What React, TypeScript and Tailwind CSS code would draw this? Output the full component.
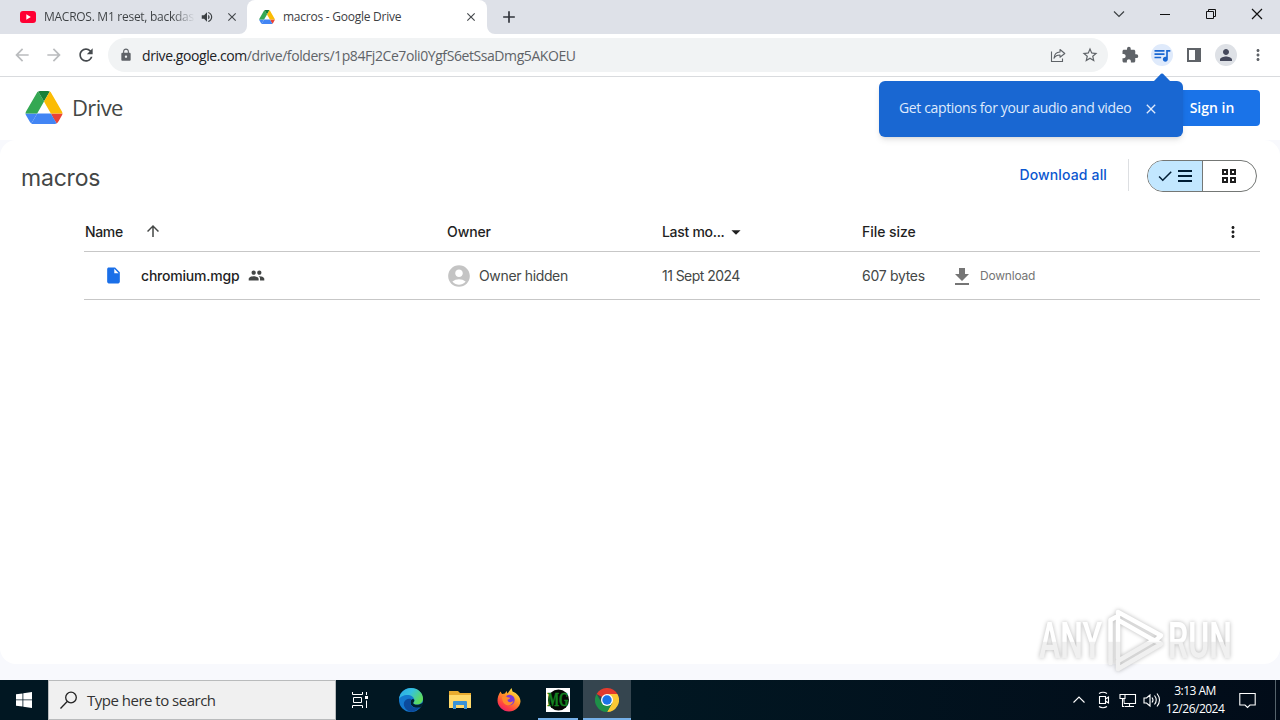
import React from 'react';
import {
  MdArrowBack,
  MdArrowForward,
  MdRefresh,
  MdLock,
  MdVolumeUp,
  MdClose,
  MdAdd,
  MdStarBorder,
  MdExtension,
  MdQueueMusic,
  MdPerson,
  MdMoreVert,
  MdArrowUpward,
  MdArrowDropDown,
  MdInsertDriveFile,
  MdPeople,
  MdAccountCircle,
  MdCheck,
  MdFileDownload,
} from 'react-icons/md';

const DriveLogo = ({ className }: { className: string }) => (
  <svg viewBox="0 0 87.3 78" className={className}>
    <path d="m6.6 66.85 3.85 6.65c.8 1.4 1.95 2.5 3.3 3.3l13.75-23.8h-27.5c0 1.55.4 3.1 1.2 4.5z" fill="#4285f4" />
    <path d="m43.65 25-13.75-23.8c-1.35.8-2.5 1.9-3.3 3.3l-25.4 44a9.06 9.06 0 0 0 -1.2 4.5h27.5z" fill="#34a853" />
    <path d="m73.55 76.8c1.35-.8 2.5-1.9 3.3-3.3l1.6-2.75 7.65-13.25c.8-1.4 1.2-2.95 1.2-4.5h-27.5l5.85 11.5z" fill="#ea4335" />
    <path d="m43.65 25 13.75-23.8c-1.35-.8-2.9-1.2-4.5-1.2h-18.5c-1.6 0-3.15.45-4.5 1.2z" fill="#188038" />
    <path d="m59.8 53h-32.3l-13.75 23.8c1.35.8 2.9 1.2 4.5 1.2h50.8c1.6 0 3.15-.45 4.5-1.2z" fill="#4285f4" />
    <path d="m73.4 26.5-12.7-22c-.8-1.4-1.95-2.5-3.3-3.3l-13.75 23.8 16.15 28h27.45c0-1.55-.4-3.1-1.2-4.5z" fill="#fbbc04" />
  </svg>
);

const TabStrip = () => (
  <div className="flex h-[34px] shrink-0 bg-[#dee1e8] font-['Open_Sans',sans-serif] text-[12px]">
    <div className="flex w-[247px] items-center pl-5">
      <svg viewBox="0 0 16 12" className="h-3 w-4 shrink-0">
        <rect width="16" height="12" rx="3" fill="#ff0033" />
        <path d="M6.3 3.3 10.8 6 6.3 8.7z" fill="#fff" />
      </svg>
      <div className="ml-2 w-[151px] bg-linear-to-r from-[#3c4043] from-85% to-transparent bg-clip-text tracking-[-0.27px] whitespace-nowrap text-transparent">
        MACROS. M1 reset, backdas
      </div>
      <MdVolumeUp className="ml-[5px] h-3.5 w-3.5 shrink-0 text-[#3c4043]" />
      <MdClose className="ml-[11px] h-3.5 w-3.5 shrink-0 text-[#45494d]" />
    </div>
    <div className="relative flex w-60 items-center rounded-t-lg bg-white pr-[9px] pl-3">
      <svg viewBox="0 0 8 8" className="absolute bottom-0 -left-2 h-2 w-2">
        <path d="M8 0v8H0a8 8 0 0 0 8-8z" fill="#fff" />
      </svg>
      <svg viewBox="0 0 8 8" className="absolute -right-2 bottom-0 h-2 w-2">
        <path d="M0 0v8h8a8 8 0 0 1-8-8z" fill="#fff" />
      </svg>
      <DriveLogo className="h-[14px] w-4" />
      <span className="ml-2 grow tracking-[-0.25px] text-[#3c4043]">macros - Google Drive</span>
      <MdClose className="h-3.5 w-3.5 text-[#45494d]" />
    </div>
    <div className="flex items-center pl-3">
      <MdAdd className="h-5 w-5 text-[#30343b]" />
    </div>
    <svg viewBox="0 0 180 34" className="ml-auto h-[34px] w-[180px]" fill="none" stroke="#111">
      <path d="m14 11.5 5 5 5-5" stroke="#3c4043" strokeWidth="1.2" />
      <path d="M60 14.5h10" />
      <path d="M106.500 11.500h7v7h-7zM108.500 11.500v-2h7v7h-2" />
      <path d="m152 9 10 10m0-10-10 10" strokeWidth="1.2" />
    </svg>
  </div>
);

const Toolbar = () => (
  <div className="flex h-[43px] shrink-0 items-center border-b border-[#d9dbde] bg-white pl-3 text-[#5f6368]">
    <MdArrowBack className="h-5 w-5 text-[#babcbe]" />
    <MdArrowForward className="ml-3 h-5 w-5 text-[#babcbe]" />
    <MdRefresh className="ml-3 h-5 w-5 text-[#45494d]" />
    <div className="ml-3 flex h-[34px] w-[1000px] items-center rounded-full bg-[#f1f3f4] pl-[11px]">
      <MdLock className="h-[14px] w-[14px]" />
      <div className="ml-[9px] font-['Open_Sans',sans-serif] text-[14px] tracking-[-0.42px]">
        <span className="text-[#202124]">drive.google.com</span>/drive/folders/1p84Fj2Ce7oli0YgfS6etSsaDmg5AKOEU
      </div>
      <svg viewBox="0 0 16 16" className="ml-auto h-4 w-4" fill="none" stroke="#5f6368" strokeWidth="1.1">
        <path d="M1.500 4.500v10h11v-3" />
        <path d="M10 2.500 14.800 6.500 10 10.200V8C7 8 5.200 9 4 11.200 4.300 7.500 6.500 5.200 10 5z" strokeLinejoin="round" />
      </svg>
      <MdStarBorder className="mr-[9px] ml-[15px] h-[18px] w-[18px]" />
    </div>
    <MdExtension className="ml-[13px] h-[18px] w-[18px]" />
    <div className="ml-[12px] flex h-[22px] w-[22px] items-center justify-center rounded-full bg-[#dfeafb]">
      <MdQueueMusic className="h-5 w-5 text-[#1967d2]" />
    </div>
    <svg viewBox="0 0 14 14" className="ml-[14px] h-3.5 w-3.5">
      <path d="M0 0h14v14H0zM2 2v10h6V2z" fill="#5f6368" fillRule="evenodd" />
    </svg>
    <div className="ml-[14px] flex h-[22px] w-[22px] items-center justify-center rounded-full bg-[#dee1e6]">
      <MdPerson className="h-[18px] w-[18px] text-[#45495c]" />
    </div>
    <MdMoreVert className="ml-3 h-[18px] w-[18px]" />
  </div>
);

const CaptionsBubble = () => (
  <div className="absolute top-[81px] left-[879px] flex h-14 w-[304px] items-center rounded-md bg-[#1967d2] pb-[3px] pl-5 font-['Open_Sans',sans-serif] text-[14px] text-[#dfeafc] shadow-md">
    <svg viewBox="0 0 18 9" className="absolute -top-2 left-[274px] h-[9px] w-[18px]">
      <path d="M0 9 8 .8q1-.8 2 0L18 9z" fill="#1967d2" />
    </svg>
    <span className="w-[244px] tracking-[-0.37px]">Get captions for your audio and video</span>
    <MdClose className="mt-[3px] h-4 w-4" />
  </div>
);

const FileTable = () => (
  <div className="mr-5 ml-[84px] text-[14px] text-[#444746]">
    <div className="flex h-[47px] items-center border-b border-[#c7c7c7] pt-[7px] font-medium text-[#1f1f1f]">
      <div className="flex w-[363px] items-center pl-px">
        <span className="tracking-[-0.35px]">Name</span>
        <MdArrowUpward className="mb-px ml-[21px] h-[18px] w-[18px] text-[#444746]" />
      </div>
      <div className="w-[215px] tracking-[-0.1px]">Owner</div>
      <div className="flex w-[200px] items-center">
        <span className="tracking-[-0.3px]">Last mo...</span>
        <MdArrowDropDown className="h-[22px] w-[22px]" />
      </div>
      <div className="grow tracking-[-0.05px]">File size</div>
      <MdMoreVert className="mr-[18px] h-[18px] w-[18px]" />
    </div>
    <div className="flex h-12 items-center border-b border-[#c7c7c7]">
      <div className="flex w-[363px] items-center pl-5 text-[#1f1f1f]">
        <MdInsertDriveFile className="h-[19px] w-[19px] text-[#1a6fe8]" />
        <span className="ml-[18px] font-medium tracking-[-0.2px]">chromium.mgp</span>
        <MdPeople className="ml-2 h-[17px] w-[17px] text-[#444746]" />
      </div>
      <div className="flex w-[215px] items-center">
        <MdAccountCircle className="-ml-px h-[26px] w-[26px] text-[#c4c4c4]" />
        <span className="ml-[7px] tracking-[-0.35px]">Owner hidden</span>
      </div>
      <div className="w-[200px] tracking-[-0.55px]">11 Sept 2024</div>
      <div className="w-[88px] tracking-[-0.3px]">607 bytes</div>
      <MdFileDownload className="mt-[2px] h-6 w-6 text-[#757575]" />
      <span className="ml-[6px] text-[12px] tracking-[-0.2px] text-[#757575]">Download</span>
    </div>
  </div>
);

const DrivePage = () => (
  <div className="flex grow flex-col bg-[#f8f9fd] font-['Inter',sans-serif]">
    <div className="flex h-[63px] items-center bg-white pr-5 pb-[2px] pl-[25px]">
      <DriveLogo className="h-[33px] w-[38px]" />
      <span className="ml-[9px] font-['Open_Sans',sans-serif] text-[22px] tracking-[-0.6px] text-[#444746]">Drive</span>
      <div className="ml-auto flex h-9 w-24 items-center justify-center rounded bg-[#1a73e8] font-['Open_Sans',sans-serif] text-[14px] font-semibold text-white">
        Sign in
      </div>
    </div>
    <div className="h-[524px] rounded-2xl bg-white">
      <div className="flex h-[65px] items-center pr-[23px] pl-[21px]">
        <h1 className="mt-3 text-[23px] tracking-[-0.2px] text-[#444746]">macros</h1>
        <span className="mt-[4px] ml-auto text-[14px] font-medium tracking-[0.15px] text-[#0b57d0]">Download all</span>
        <div className="mt-[5px] ml-[21px] h-8 w-px bg-[#dddfe2]" />
        <div className="mt-[7px] ml-[18px] flex h-8 w-[110px] overflow-hidden rounded-full border border-[#747775] text-[#1f1f1f]">
          <div className="flex w-[55px] items-center gap-[4px] border-r border-[#747775] bg-[#c2e7ff] pl-[8px] text-[#001d35]">
            <MdCheck className="h-[18px] w-[18px]" />
            <svg viewBox="0 0 14 12" className="h-3 w-3.5">
              <path d="M0 0h14v2H0zM0 5h14v2H0zM0 10h14v2H0z" fill="currentColor" />
            </svg>
          </div>
          <div className="flex grow items-center justify-center pr-[2px]">
            <svg viewBox="0 0 14 14" className="h-3.5 w-3.5" fill="none" stroke="currentColor" strokeWidth="2">
              <path d="M1 1h4v4H1zM9 1h4v4H9zM1 9h4v4H1zM9 9h4v4H9z" />
            </svg>
          </div>
        </div>
      </div>
      <FileTable />
    </div>
  </div>
);

const Watermark = () => (
  <svg
    viewBox="0 0 200 68"
    className="absolute top-[606px] left-[1036px] h-[68px] w-[200px] overflow-visible drop-shadow-[0_0_2px_rgba(0,0,0,0.28)]"
    fill="url(#mark)"
    fontFamily="Roboto, sans-serif"
    fontWeight="600"
    fontSize="50"
  >
    <defs>
      <linearGradient id="mark" gradientUnits="userSpaceOnUse" x1="0" y1="0" x2="0" y2="68">
        <stop offset="0.52" stopColor="#fff" />
        <stop offset="0.53" stopColor="#f0f0f0" />
      </linearGradient>
    </defs>
    <text x="3" y="52" textLength="63" lengthAdjust="spacingAndGlyphs">ANY</text>
    <text x="132" y="52" textLength="64" lengthAdjust="spacingAndGlyphs">RUN</text>
    <path
      d="M74.500 57V14L80 11M82 52V6L125 29.500 119 35 82 14M82 63 125 38 118 34 82 55z"
      fill="none"
      stroke="url(#mark)"
      strokeWidth="4.500"
      strokeLinejoin="round"
      strokeLinecap="round"
    />
  </svg>
);

const EdgeIcon = () => (
  <svg viewBox="0 0 24 24" className="h-6 w-6">
    <defs>
      <linearGradient id="edgeTop" x1="0" y1="0" x2="1" y2="0.5">
        <stop offset="0" stopColor="#2aa7e6" />
        <stop offset="0.5" stopColor="#35c1e0" />
        <stop offset="1" stopColor="#5edb5c" />
      </linearGradient>
    </defs>
    <circle cx="12" cy="12" r="12" fill="#1479cf" />
    <path d="M0 11C1 4 6 0 12 0c7 0 12 5 12 10.500 0 4-3 6-6.500 6-2.500 0-3.500-1-3.300-1.800 1-1 1.300-2 1.100-3.200C14.800 9 12 7 8.500 7 4.500 7 1.200 9 0 11z" fill="url(#edgeTop)" />
    <path d="M11.500 14.500c0-2 1.200-3.500 2.500-3.500 1 0 1.500 1 1.300 2-.2 1-1.300 1.300-1 2.200.8 2 6 2.300 9.700-.8.300 1.700-1.200 3.800-2.700 5-5 1.500-9.800-1-9.800-4.900z" fill="#012030" />
    <path d="M11.500 14.500c0 4 4 6.500 9.300 4.700C18.500 22 15.500 23.700 12 24 7 22.500 4 18.500 5 14.500 6 11 9.500 10 12.500 11c-.7.800-1 2-1 3.500z" fill="#0c4a9c" />
  </svg>
);

const FolderIcon = () => (
  <svg viewBox="0 0 22 18" className="h-[18px] w-[22px]">
    <path d="M0 0h9l2 2h11v15H0z" fill="#e8ab2f" />
    <path d="M0 4h22v13H0z" fill="#ffd96a" />
    <path d="M4 18v-7q0-1 1-1h12q1 0 1 1v7h-3v-4H7v4z" fill="#3993d6" />
  </svg>
);

const FirefoxIcon = () => (
  <svg viewBox="0 0 24 24" className="h-6 w-6">
    <defs>
      <linearGradient id="fox" x1="0.8" y1="0" x2="0.2" y2="1">
        <stop offset="0" stopColor="#fff04a" />
        <stop offset="0.4" stopColor="#ff9a26" />
        <stop offset="0.75" stopColor="#ff4440" />
        <stop offset="1" stopColor="#e81a72" />
      </linearGradient>
    </defs>
    <path d="M3.500 3.500 5 6l3-.5L9.500 3l1 2.500 4-5.500 1 3.500C20 5 23.500 9 23.500 13.500 23 19 18 23.500 12 23.500S.5 18.500.5 12.500c0-3 1-6 3-9z" fill="url(#fox)" />
    <circle cx="12.500" cy="12" r="5.200" fill="#7a38d8" />
    <path d="M5 9c2-1.500 4-1 5.500.2l2.500.5c0 1.300-1.500 1.500-2.500 2 0 2.500 3.500 3.300 6 1.300-1 3.500-4 5-7 4C6.500 16 5 12.500 5 9z" fill="#ff8b2b" />
  </svg>
);

const MacroIcon = () => (
  <svg viewBox="0 0 24 24" className="h-6 w-6 overflow-visible">
    <path d="M0 0h24v24H0z" fill="#fff" />
    <circle cx="12.500" cy="12" r="10.500" fill="#050805" />
    <text x="1.500" y="17.500" fontFamily="Liberation Serif, serif" fontWeight="700" fontSize="18" textLength="21" lengthAdjust="spacingAndGlyphs" fill="#148220" stroke="#148220" strokeWidth="0.5">MG</text>
  </svg>
);

const ChromeIcon = () => (
  <svg viewBox="0 0 24 24" className="h-6 w-6">
    <path d="M12 12 1.600 6A12 12 0 0 1 22.400 6H12z" fill="#e33b2e" />
    <path d="M22.400 6A12 12 0 0 1 12 24l5.200-9L12 6z" fill="#fcc934" />
    <path d="M12 24A12 12 0 0 1 1.600 6l5.200 9 5.200 3 5.200-3z" fill="#1e9048" />
    <circle cx="12" cy="12" r="6" fill="#fff" />
    <circle cx="12" cy="12" r="4.700" fill="#1a73e8" />
  </svg>
);

const Taskbar = () => (
  <div className="flex h-10 shrink-0 bg-linear-to-r from-[#011722] from-50% to-[#020c19] text-white">
    <div className="flex w-12 items-center justify-center">
      <svg viewBox="0 0 16 16" className="h-4 w-4" fill="#fff">
        <path d="M0 2.300 6.500 1.400v6.100H0zM7.300 1.300 16 0v7.500H7.300zM0 8.300h6.500v6.300L0 13.700zM7.300 8.300H16V16l-8.700-1.300z" />
      </svg>
    </div>
    <div className="flex w-72 items-center border border-[#b9bbbc] bg-[#f0f0f0] pl-[11px] text-[#1c1c1c]">
      <svg viewBox="0 0 18 18" className="h-[18px] w-[18px]" fill="none" stroke="#222" strokeWidth="1.300">
        <circle cx="11" cy="6.500" r="5.300" />
        <path d="m7.200 10.500-6.700 7" />
      </svg>
      <span className="ml-[9px] font-['Open_Sans',sans-serif] text-[15px] tracking-[-0.5px] text-[#333]">Type here to search</span>
    </div>
    <div className="flex w-[51px] items-center pl-4">
      <svg viewBox="0 0 16 16" className="h-4 w-4" fill="none" stroke="#fff">
        <path d="M.5 0v2.500h10V0M.5 16v-2.500h10V16M1.500 5.500h8v5h-8zM14.500 0v3M14.500 8.500V16" />
        <path d="M13 4h3v3h-3z" fill="#fff" stroke="none" />
      </svg>
    </div>
    <div className="flex gap-px">
      <div className="flex w-12 items-center justify-center"><EdgeIcon /></div>
      <div className="flex w-12 items-center justify-center"><FolderIcon /></div>
      <div className="flex w-12 items-center justify-center"><FirefoxIcon /></div>
      <div className="flex w-12 flex-col items-center pt-2">
        <MacroIcon />
        <div className="mt-auto h-[2px] w-10 bg-[#76b0e8]" />
      </div>
      <div className="flex w-12 flex-col items-center bg-[#35454f] pt-2">
        <ChromeIcon />
        <div className="mt-auto h-[2px] w-12 bg-[#76b0e8]" />
      </div>
    </div>
    <svg viewBox="0 0 92 40" className="ml-auto h-10 w-[92px]" fill="none" stroke="#fff" strokeWidth="1.100">
      <path d="m1.500 22.500 5.500-5.500 5.500 5.500" />
      <path d="M27.500 16.500h6v7h-6zM33.500 19l3-2v6l-3-2M27 13.500q4-2.500 8 0M27 26.500q4 2.500 8 0" />
      <path d="M52 14.500h11.500v9H52zM57.500 23.500v3M53 26.500h9" />
      <path d="M48 14.500h5v4h-5zM50.500 18.500v8h2" fill="#020f1b" />
      <path d="M72 18h2.500l3.500-3v11l-3.500-3H72zM80 17.500q2 2.500 0 5M82.500 15.500q3.500 4.500 0 9M85 13.500q5 6.500 0 13" />
    </svg>
    <div className="w-[62px] pt-[2px] text-center font-['Open_Sans',sans-serif] text-[12px] leading-[18px] tracking-[-0.5px]">
      <div>3:13 AM</div>
      <div>12/26/2024</div>
    </div>
    <div className="ml-[7px] flex w-[43px] items-center border-r border-[#56636c] pl-[6px]">
      <svg viewBox="0 0 17 17" className="h-[17px] w-[17px]" fill="none" stroke="#fff" strokeWidth="1.100">
        <path d="M.8 1.500h15.400v11.500H11L8.500 15.500 6 13H.8z" />
      </svg>
    </div>
    <div className="w-1" />
  </div>
);

const App: React.FC = () => {
  return (
    <div className="relative flex h-[720px] w-[1280px] flex-col overflow-hidden bg-white">
      <TabStrip />
      <Toolbar />
      <DrivePage />
      <CaptionsBubble />
      <Watermark />
      <Taskbar />
    </div>
  );
};

export default App;
